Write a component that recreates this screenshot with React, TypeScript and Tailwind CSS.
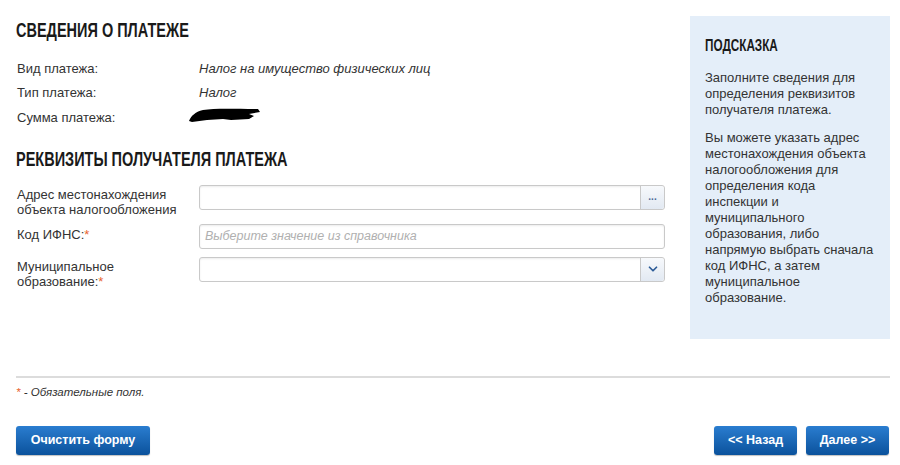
import { ChevronDown } from 'lucide-react';

const body = { fontFamily: '"Liberation Sans", Arial, sans-serif' };

const Req = () => <span className="text-[#e8632c]">*</span>;

// narrow bold headings, like the site's condensed caps font
const Title = ({ children, className }: { children: React.ReactNode; className: string }) => (
  <div className={`whitespace-nowrap font-bold text-[#1a1a1a] ${className}`}>
    <span className="inline-block origin-left scale-x-[0.69]">{children}</span>
  </div>
);

const InfoRow = ({ label, children }: { label: string; children: React.ReactNode }) => (
  <div className="flex h-[24.5px] items-center">
    <div className="w-[182px] text-[13px] text-[#333]">{label}</div>
    <div className="text-[13px] italic text-[#333]">{children}</div>
  </div>
);

const Redacted = () => (
  <svg width="74" height="16" viewBox="0 0 74 16" className="-ml-[12px] mt-[-4px]">
    <path d="M2 14 C4 9 8 5 16 3 C28 1 48 2 71 2 L73 5 L62 7 L67 9 L62 12 L44 13 L36 12 L20 13 L5 15 Z" fill="#000" />
  </svg>
);

const fieldBox =
  'flex h-[25px] w-[466px] rounded-[3px] border border-[#c9c9c9] bg-white shadow-[inset_0_1px_2px_rgba(0,0,0,0.08)]';
const addon =
  'flex w-[24px] items-center justify-center rounded-r-[3px] border-l border-[#c9c9c9] bg-gradient-to-b from-[#f7f9fc] to-[#e2e9f2]';
const blueBtn =
  'h-[29px] rounded-[3px] bg-gradient-to-b from-[#2a7dd0] to-[#0a529c] text-[12.5px] font-bold text-white shadow-[0_1px_1px_rgba(0,0,0,0.25)]';

export default function App() {
  return (
    <div className="h-[465px] w-[900px] bg-white pl-4 pr-[10px]" style={body}>
      <div className="flex">
        {/* left column */}
        <div className="flex-1 pr-4">
          <Title className="mt-[18px] text-[21px] leading-[24px]">СВЕДЕНИЯ О ПЛАТЕЖЕ</Title>
          <div className="mt-[14px] pl-[1px]">
            <InfoRow label="Вид платежа:">Налог на имущество физических лиц</InfoRow>
            <InfoRow label="Тип платежа:">Налог</InfoRow>
            <InfoRow label="Сумма платежа:">
              <Redacted />
            </InfoRow>
          </div>

          <Title className="mt-[17px] text-[21px] leading-[24px]">РЕКВИЗИТЫ ПОЛУЧАТЕЛЯ ПЛАТЕЖА</Title>

          <div className="mt-[14px] pl-[1px] text-[13px] text-[#333]">
            <div className="flex h-[39px]">
              <div className="w-[182px] pt-[2px] leading-[15px]">
                Адрес местонахождения
                <br />
                объекта налогообложения
              </div>
              <div className={fieldBox}>
                <div className="flex-1" />
                <div className={`${addon} text-[10px] font-bold leading-none text-[#4a6a96]`}>...</div>
              </div>
            </div>

            <div className="flex h-[33px]">
              <div className="w-[182px] pt-[3px] leading-[15px]">
                Код ИФНС:<Req />
              </div>
              <div className={`${fieldBox} items-center px-[5px]`}>
                <span className="text-[12.5px] italic text-[#b0b0b0]">Выберите значение из справочника</span>
              </div>
            </div>

            <div className="flex h-[36px]">
              <div className="w-[182px] pt-[2px] leading-[15px]">
                Муниципальное
                <br />
                образование:<Req />
              </div>
              <div className={fieldBox}>
                <div className="flex-1" />
                <div className={addon}>
                  <ChevronDown className="h-[14px] w-[14px] text-[#2d5c98]" strokeWidth={3} />
                </div>
              </div>
            </div>
          </div>
        </div>

        {/* hint panel */}
        <div className="mt-4 h-[323px] w-[200px] bg-[#e4eef9] px-[15px] pt-[20px]">
          <Title className="text-[17px] leading-[20px]">ПОДСКАЗКА</Title>
          <p className="mt-[14px] text-[13px] leading-[16px] text-[#333]">
            Заполните сведения для определения реквизитов получателя платежа.
          </p>
          <p className="mt-[12px] text-[13px] leading-[16px] text-[#333]">
            Вы можете указать адрес местонахождения объекта налогообложения для определения кода инспекции и муниципального
            образования, либо напрямую выбрать сначала код ИФНС, а затем муниципальное образование.
          </p>
        </div>
      </div>

      <div className="mt-[37px] h-[2px] bg-[#dcdcdc]" />
      <div className="mt-[6px] text-[11.5px] italic text-[#333]">
        <Req /> - Обязательные поля.
      </div>

      <div className="mt-[25px] flex items-center">
        <button className={`${blueBtn} w-[134px]`}>Очистить форму</button>
        <div className="flex-1" />
        <div className="flex gap-[9px] pr-[1px]">
          <button className={`${blueBtn} w-[83px]`}>&lt;&lt; Назад</button>
          <button className={`${blueBtn} w-[83px]`}>Далее &gt;&gt;</button>
        </div>
      </div>
    </div>
  );
}
